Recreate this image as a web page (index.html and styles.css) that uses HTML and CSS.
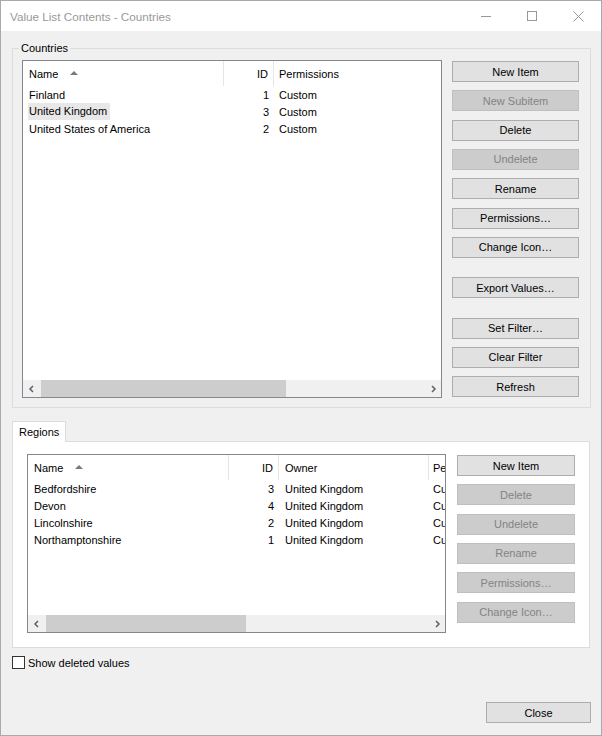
FILE: index.html
```html
<!DOCTYPE html>
<html lang="en">
<head>
  <meta charset="UTF-8">
  <title>Value List Contents - Countries</title>
  <link rel="stylesheet" href="styles.css">
</head>
<body>
  <div class="window">
    <div class="titlebar">
      <span class="title">Value List Contents - Countries</span>
      <div class="caption-buttons">
        <div class="caption-btn">
          <svg width="10" height="10" viewBox="0 0 10 10"><line x1="0" y1="5.5" x2="10" y2="5.5" stroke="#999" stroke-width="1"/></svg>
        </div>
        <div class="caption-btn">
          <svg width="10" height="10" viewBox="0 0 10 10"><rect x="0.5" y="0.5" width="9" height="9" fill="none" stroke="#999" stroke-width="1"/></svg>
        </div>
        <div class="caption-btn">
          <svg width="11" height="11" viewBox="0 0 11 11"><path d="M0.5 0.5 L10.5 10.5 M10.5 0.5 L0.5 10.5" stroke="#999" stroke-width="1"/></svg>
        </div>
      </div>
    </div>

    <div class="client">
      <!-- Countries -->
      <div class="groupbox">
        <span class="group-label">Countries</span>
        <div class="listview countries-list">
          <div class="list-body">
            <div class="list-row list-header">
              <div class="cell col-name">Name<span class="sort-arrow"></span></div>
              <div class="cell col-id">ID</div>
              <div class="cell col-perm">Permissions</div>
            </div>
            <div class="list-row">
              <div class="cell col-name">Finland</div>
              <div class="cell col-id">1</div>
              <div class="cell col-perm">Custom</div>
            </div>
            <div class="list-row">
              <div class="cell col-name"><span class="selected">United Kingdom</span></div>
              <div class="cell col-id">3</div>
              <div class="cell col-perm">Custom</div>
            </div>
            <div class="list-row">
              <div class="cell col-name">United States of America</div>
              <div class="cell col-id">2</div>
              <div class="cell col-perm">Custom</div>
            </div>
          </div>
          <div class="hscroll">
            <div class="scroll-arrow"><svg width="8" height="8" viewBox="0 0 8 8"><polyline points="5,1 2,4 5,7" fill="none" stroke="#606060" stroke-width="1.5"/></svg></div>
            <div class="scroll-track"><div class="scroll-thumb thumb-top"></div></div>
            <div class="scroll-arrow"><svg width="8" height="8" viewBox="0 0 8 8"><polyline points="3,1 6,4 3,7" fill="none" stroke="#606060" stroke-width="1.5"/></svg></div>
          </div>
        </div>
        <div class="button-column wide">
          <button class="btn">New Item</button>
          <button class="btn" disabled>New Subitem</button>
          <button class="btn">Delete</button>
          <button class="btn" disabled>Undelete</button>
          <button class="btn">Rename</button>
          <button class="btn">Permissions…</button>
          <button class="btn">Change Icon…</button>
          <button class="btn spaced">Export Values…</button>
          <button class="btn spaced">Set Filter…</button>
          <button class="btn">Clear Filter</button>
          <button class="btn">Refresh</button>
        </div>
      </div>

      <!-- Regions -->
      <div class="tabs">
        <div class="tab-strip">
          <div class="tab">Regions</div>
        </div>
        <div class="tab-panel">
          <div class="listview regions-list">
            <div class="list-body">
              <div class="list-row list-header">
                <div class="cell col-name">Name<span class="sort-arrow"></span></div>
                <div class="cell col-id">ID</div>
                <div class="cell col-owner">Owner</div>
                <div class="cell col-perm2">Permissions</div>
              </div>
              <div class="list-row">
                <div class="cell col-name">Bedfordshire</div>
                <div class="cell col-id">3</div>
                <div class="cell col-owner">United Kingdom</div>
                <div class="cell col-perm2">Custom</div>
              </div>
              <div class="list-row">
                <div class="cell col-name">Devon</div>
                <div class="cell col-id">4</div>
                <div class="cell col-owner">United Kingdom</div>
                <div class="cell col-perm2">Custom</div>
              </div>
              <div class="list-row">
                <div class="cell col-name">Lincolnshire</div>
                <div class="cell col-id">2</div>
                <div class="cell col-owner">United Kingdom</div>
                <div class="cell col-perm2">Custom</div>
              </div>
              <div class="list-row">
                <div class="cell col-name">Northamptonshire</div>
                <div class="cell col-id">1</div>
                <div class="cell col-owner">United Kingdom</div>
                <div class="cell col-perm2">Custom</div>
              </div>
            </div>
            <div class="hscroll">
              <div class="scroll-arrow"><svg width="8" height="8" viewBox="0 0 8 8"><polyline points="5,1 2,4 5,7" fill="none" stroke="#606060" stroke-width="1.5"/></svg></div>
              <div class="scroll-track"><div class="scroll-thumb thumb-bottom"></div></div>
              <div class="scroll-arrow"><svg width="8" height="8" viewBox="0 0 8 8"><polyline points="3,1 6,4 3,7" fill="none" stroke="#606060" stroke-width="1.5"/></svg></div>
            </div>
          </div>
          <div class="button-column narrow">
            <button class="btn">New Item</button>
            <button class="btn" disabled>Delete</button>
            <button class="btn" disabled>Undelete</button>
            <button class="btn" disabled>Rename</button>
            <button class="btn" disabled>Permissions…</button>
            <button class="btn" disabled>Change Icon…</button>
          </div>
        </div>
      </div>

      <label class="checkbox">
        <span class="check-box"></span>
        <span>Show deleted values</span>
      </label>

      <div class="footer">
        <button class="btn close-btn">Close</button>
      </div>
    </div>
  </div>
</body>
</html>
```

FILE: styles.css
```css
* {
  box-sizing: border-box;
}

body {
  margin: 0;
  padding: 0;
  font-family: "Segoe UI", "Liberation Sans", Arial, sans-serif;
  font-size: 11px;
  color: #000000;
  background-color: #f0f0f0;
}

.window {
  width: 602px;
  height: 736px;
  border: 1px solid #aaaaaa;
  background-color: #f0f0f0;
  display: flex;
  flex-direction: column;
}

/* タイトルバー */
.titlebar {
  height: 30px;
  background-color: white;
  display: flex;
  align-items: center;
  justify-content: space-between;
  padding-left: 9px;
}

.title {
  font-size: 11.7px;
  color: #999999;
}

.caption-buttons {
  display: flex;
  height: 100%;
}

.caption-btn {
  width: 46px;
  height: 30px;
  display: flex;
  align-items: center;
  justify-content: center;
}

.client {
  flex: 1;
  display: flex;
  flex-direction: column;
  padding: 0 10px 12px 11px;
}

/* グループボックス */
.groupbox {
  position: relative;
  margin-top: 17px;
  height: 360px;
  border: 1px solid #dcdcdc;
  padding: 11px 10px 9px 9px;
  display: flex;
  gap: 10px;
}

.group-label {
  position: absolute;
  top: -8px;
  left: 6px;
  padding: 0 2px;
  background-color: #f0f0f0;
  line-height: 15px;
}

/* リストビュー */
.listview {
  border: 1px solid #828790;
  background-color: white;
  display: flex;
  flex-direction: column;
  overflow: hidden;
}

.countries-list {
  width: 420px;
  height: 338px;
}

.regions-list {
  width: 419px;
  height: 179px;
}

.list-body {
  flex: 1;
  overflow: hidden;
}

.list-row {
  display: flex;
  height: 17px;
  align-items: center;
  white-space: nowrap;
}

.list-header {
  height: 25px;
  align-items: stretch;
}

.list-header .cell {
  display: flex;
  align-items: center;
  border-right: 1px solid #e5e5e5;
}

.list-header .col-perm {
  border-right: none;
}

.cell {
  flex-shrink: 0;
}

.col-name {
  width: 201px;
  padding-left: 6px;
}

.col-id {
  width: 50px;
  padding-right: 5px;
  text-align: right;
  justify-content: flex-end;
}

.col-perm {
  padding-left: 5px;
}

.col-owner {
  width: 150px;
  padding-left: 6px;
}

.col-perm2 {
  width: 100px;
  padding-left: 4px;
}

.sort-arrow {
  margin-left: 12px;
  margin-bottom: 2px;
  width: 0;
  height: 0;
  border-left: 4px solid transparent;
  border-right: 4px solid transparent;
  border-bottom: 4px solid #7a7a7a;
}

.selected {
  display: inline-block;
  margin-left: -1px;
  padding: 0 3px 0 1px;
  line-height: 17px;
  background-color: #e8e8e8;
}

/* スクロールバー */
.hscroll {
  height: 17px;
  display: flex;
  background-color: #f0f0f0;
}

.scroll-arrow {
  width: 17px;
  display: flex;
  align-items: center;
  justify-content: center;
}

.scroll-track {
  flex: 1;
  padding: 0 1px;
  display: flex;
}

.scroll-thumb {
  background-color: #cdcdcd;
  height: 100%;
}

.thumb-top {
  width: 245px;
}

.thumb-bottom {
  width: 200px;
}

/* ボタン */
.button-column {
  display: flex;
  flex-direction: column;
  gap: 8.33px;
  padding-top: 1px;
}

.button-column.wide {
  width: 127px;
}

.button-column.narrow {
  width: 118px;
}

.btn {
  height: 21px;
  width: 100%;
  font-family: inherit;
  font-size: 11px;
  font-weight: normal;
  color: #000000;
  background-color: #e1e1e1;
  border: 1px solid #adadad;
  border-radius: 0;
  padding: 0;
}

.btn:disabled {
  background-color: #cccccc;
  border-color: #bfbfbf;
  color: #838383;
}

.btn.spaced {
  margin-top: 11px;
}

/* タブ */
.tabs {
  margin-top: 13px;
  margin-right: 1px;
}

.tab-strip {
  display: flex;
}

.tab {
  position: relative;
  z-index: 1;
  width: 54px;
  height: 21px;
  margin-bottom: -1px;
  padding-left: 6px;
  line-height: 20px;
  background-color: white;
  border: 1px solid #dcdcdc;
  border-bottom: none;
}

.tab-panel {
  height: 207px;
  background-color: white;
  border: 1px solid #dcdcdc;
  padding: 12px 13px 14px 14px;
  display: flex;
  gap: 11px;
}

/* チェックボックス */
.checkbox {
  margin-top: 8px;
  display: flex;
  align-items: center;
  gap: 3px;
  height: 13px;
}

.check-box {
  width: 13px;
  height: 13px;
  border: 1px solid #333333;
  background-color: white;
}

.footer {
  margin-top: auto;
  display: flex;
  justify-content: flex-end;
}

.close-btn {
  width: 105px;
}
```
